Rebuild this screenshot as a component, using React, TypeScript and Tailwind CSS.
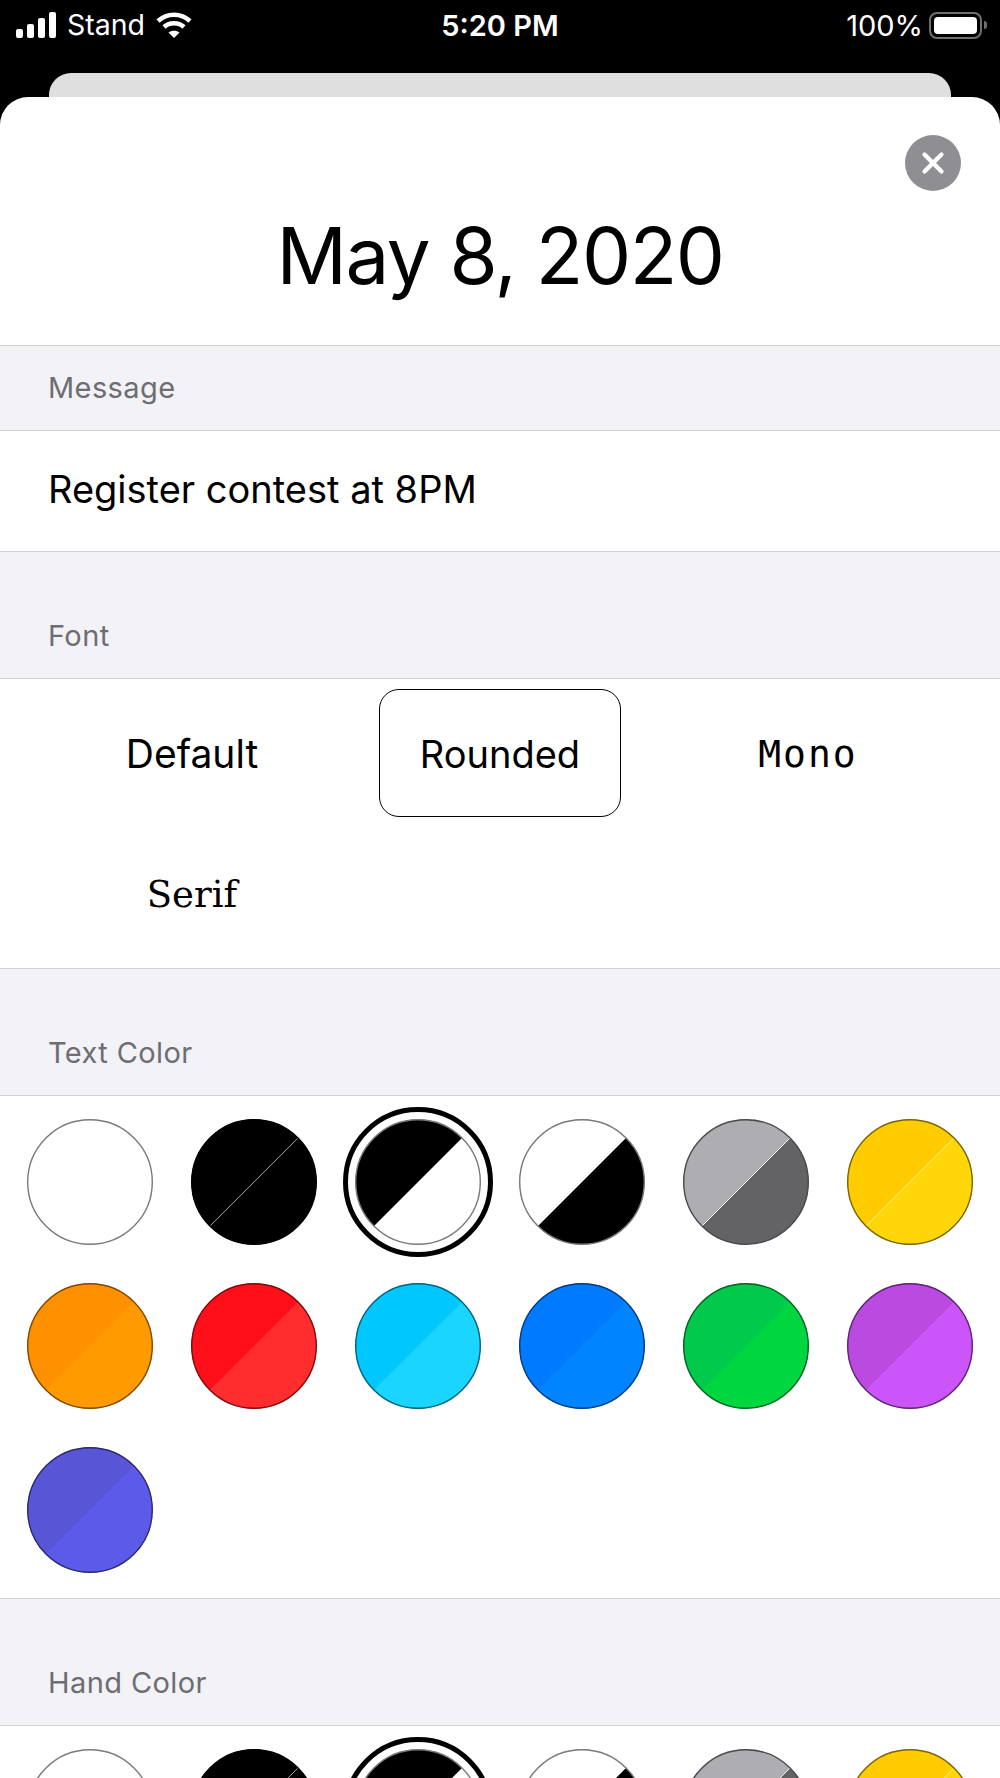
import { X } from "lucide-react";

type Swatch = { a: string; b: string; border: string; line?: string; selected?: boolean };

const SWATCHES: Swatch[] = [
  { a: "#ffffff", b: "#ffffff", border: "#7a7a7a" },
  { a: "#000000", b: "#000000", border: "#000000", line: "#9a9a9a" },
  { a: "#000000", b: "#ffffff", border: "#7a7a7a", selected: true },
  { a: "#ffffff", b: "#000000", border: "#7a7a7a" },
  { a: "#aeaeb2", b: "#636366", border: "#4a4a4c", line: "#f2f2f2" },
  { a: "#ffcc00", b: "#ffd60a", border: "#7a6500", line: "#ffe98a" },
  { a: "#ff9000", b: "#ff9a00", border: "#7f4a00" },
  { a: "#ff0f1a", b: "#ff2d2d", border: "#7f0a10" },
  { a: "#00c8ff", b: "#1ad5ff", border: "#00637f" },
  { a: "#007aff", b: "#0084ff", border: "#003d7f" },
  { a: "#00c94b", b: "#00d63f", border: "#006425" },
  { a: "#bb4be0", b: "#cb55f8", border: "#5d2570" },
  { a: "#5856d6", b: "#5c5ae8", border: "#2c2b6b" },
];

function SwatchDot({ swatch }: { swatch: Swatch }) {
  return (
    <div className="flex h-[164px] items-center justify-center">
      <div className={`flex h-[150px] w-[150px] items-center justify-center rounded-full ${swatch.selected ? "border-[5px] border-black" : ""}`}>
        <svg width="126" height="126" viewBox="0 0 126 126">
          <defs>
            <clipPath id="dot">
              <circle cx="63" cy="63" r="62.5" />
            </clipPath>
          </defs>
          <g clipPath="url(#dot)">
            <rect width="126" height="126" fill={swatch.b} />
            <polygon points="0,0 126,0 0,126" fill={swatch.a} />
            {swatch.line && <line x1="126" y1="0" x2="0" y2="126" stroke={swatch.line} strokeWidth="1" />}
          </g>
          <circle cx="63" cy="63" r="62.3" fill="none" stroke={swatch.border} strokeWidth="1.4" />
        </svg>
      </div>
    </div>
  );
}

function SwatchGrid() {
  return (
    <div className="grid grid-cols-6 bg-white px-2 pb-[6px] pt-[4px]">
      {SWATCHES.map((swatch, i) => (
        <SwatchDot key={i} swatch={swatch} />
      ))}
    </div>
  );
}

function SectionHeader({ title, tall }: { title: string; tall?: boolean }) {
  return (
    <div className={`flex items-end border-y border-[#d1d1d6] bg-[#f2f2f7] px-[48px] pb-[25px] text-[29px] leading-[35px] tracking-[0.4px] text-[#6d6d72] ${tall ? "h-[128px]" : "h-[86px]"}`}>
      {title}
    </div>
  );
}

function StatusBar() {
  return (
    <div className="relative flex h-[50px] items-center justify-between text-white">
      <div className="flex items-center pl-4">
        <svg width="42" height="26" viewBox="0 0 42 26" fill="currentColor">
          <rect x="0" y="17" width="7" height="9" rx="2" />
          <rect x="11" y="12" width="7" height="14" rx="2" />
          <rect x="22" y="6" width="7" height="20" rx="2" />
          <rect x="33" y="0" width="7" height="26" rx="2" />
        </svg>
        <span className="ml-[9px] text-[28.5px] leading-none">Stand</span>
        <svg className="ml-[11px]" width="36" height="27" viewBox="0 0 36 27" fill="none" stroke="currentColor" strokeWidth="4.5">
          <path d="M2 9 C11 0.5 25 0.5 34 9" />
          <path d="M8 15 C13.5 10 22.5 10 28 15" />
          <path d="M18 26 L12.5 20.5 C15.5 18 20.5 18 23.5 20.5 Z" fill="currentColor" stroke="none" />
        </svg>
      </div>
      <span className="absolute left-0 right-0 text-center text-[29px] font-semibold leading-none">5:20 PM</span>
      <div className="flex items-center pr-[13px]">
        <span className="text-[29px] leading-none">100%</span>
        <div className="ml-[6px] flex h-[27px] w-[53px] items-center rounded-[8px] border-2 border-[#6f6f6f] p-[3px]">
          <div className="h-full w-full rounded-[4px] bg-white" />
        </div>
        <div className="ml-[2px] h-[8px] w-[3px] rounded-r-full bg-[#6f6f6f]" />
      </div>
    </div>
  );
}

export default function App() {
  return (
    <div className="h-[1778px] w-[1000px] overflow-hidden bg-black font-['Inter','Liberation_Sans',sans-serif]">
      <StatusBar />
      <div className="mx-[49px] mt-[23px] h-[24px] rounded-t-[22px] bg-[#dfdfdf]" />
      <div className="rounded-t-[28px] bg-white">
        <div className="relative flex h-[248px] items-start justify-center pt-[112px]">
          <button className="absolute right-[39px] top-[38px] flex h-[56px] w-[56px] items-center justify-center rounded-full bg-[#8e8e93] text-white">
            <X size={34} strokeWidth={3} />
          </button>
          <h1 className="text-[78px] font-normal leading-[94px] tracking-[-1.5px] text-black">May 8, 2020</h1>
        </div>

        <SectionHeader title="Message" />
        <div className="flex h-[120px] items-center px-[48px] pb-[4px] text-[38px] text-black">Register contest at 8PM</div>

        <SectionHeader title="Font" tall />
        <div className="grid h-[289px] grid-cols-[384px_1fr_384px] content-start pt-[10px] text-[38px] text-black">
          <div className="flex h-[128px] items-center justify-center pt-[2px] text-[39px]">Default</div>
          <div className="mx-[-5px] flex h-[128px] items-center justify-center rounded-[20px] border border-black pt-[2px]">Rounded</div>
          <div className="flex h-[128px] items-center justify-center pt-[2px] font-['DejaVu_Sans_Mono','Liberation_Mono',monospace] tracking-[2px]">Mono</div>
          <div className="mt-[12px] flex h-[128px] items-center justify-center pt-[4px] font-['DejaVu_Serif','Liberation_Serif',serif] text-[37px]">Serif</div>
        </div>

        <SectionHeader title="Text Color" tall />
        <SwatchGrid />

        <SectionHeader title="Hand Color" tall />
        <SwatchGrid />
      </div>
    </div>
  );
}
